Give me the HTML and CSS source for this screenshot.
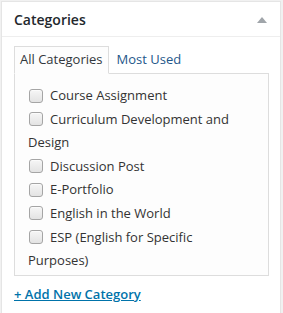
FILE: index.html
```html
<!DOCTYPE html>
<html>
<head>
<meta charset="utf-8">
<link rel="stylesheet" href="styles.css">
</head>
<body>
<div class="postbox">
  <div class="hndle">
    <h3 class="title">Categories</h3>
    <svg class="toggle" width="10" height="6" viewBox="0 0 10 6"><polygon points="5,0 10,6 0,6" fill="#a0a5aa"/></svg>
  </div>
  <div class="inside">
    <ul class="tabs">
      <li class="tab active">All Categories</li>
      <li class="tab"><a class="tab-link" href="#">Most Used</a></li>
    </ul>
    <div class="panel">
      <ul class="checklist">
        <li><label><input type="checkbox" class="cb">Course Assignment</label></li>
        <li><label><input type="checkbox" class="cb">Curriculum Development and Design</label></li>
        <li><label><input type="checkbox" class="cb">Discussion Post</label></li>
        <li><label><input type="checkbox" class="cb">E-Portfolio</label></li>
        <li><label><input type="checkbox" class="cb">English in the World</label></li>
        <li><label><input type="checkbox" class="cb">ESP (English for Specific Purposes)</label></li>
      </ul>
    </div>
    <a class="add-new" href="#">+ Add New Category</a>
  </div>
</div>
</body>
</html>
```
FILE: styles.css
```css
html, body {
  margin: 0;
  padding: 0;
}
body {
  background: #f1f1f1;
  font-family: "Open Sans", "Noto Sans", sans-serif;
  width: 283px;
  height: 313px;
  overflow: hidden;
}
.postbox {
  box-sizing: border-box;
  margin: 1px 0 0 1px;
  width: 280px;
  height: 312px;
  border: 1px solid #e5e5e5;
  border-bottom: none;
  background: #fff;
  overflow: hidden;
}
.hndle {
  display: flex;
  align-items: center;
  justify-content: space-between;
  padding: 8px 13px 7px 12px;
  border-bottom: 1px solid #eee;
}
.title {
  margin: 0;
  font-size: 14px;
  font-weight: 600;
  line-height: 19px;
  color: #23282d;
}
.toggle {
  display: block;
  margin-top: 1px;
}
.inside {
  padding: 9px 11px 0 12px;
}
.tabs {
  list-style: none;
  margin: 0 0 -1px 0;
  padding: 0;
  display: flex;
  gap: 1px;
  position: relative;
  z-index: 1;
}
.tab {
  padding: 3px 6px 5px 5px;
  font-size: 13px;
  line-height: 18px;
  color: #32373c;
  border: 1px solid transparent;
}
.tab.active {
  border-color: #ddd;
  border-bottom-color: #fdfdfd;
  background: #fdfdfd;
}
.tab-link {
  color: #23578a;
  text-decoration: none;
}
.panel {
  border: 1px solid #ddd;
  background: #fdfdfd;
  padding: 10px 16px 2px 13px;
}
.checklist {
  list-style: none;
  margin: 0;
  padding: 0;
}
.checklist li {
  font-size: 13px;
  line-height: 23.6px;
  color: #333;
}
.cb {
  -webkit-appearance: none;
  appearance: none;
  width: 14px;
  height: 14px;
  margin: -2px 7px 0 1px;
  vertical-align: middle;
  border: 1px solid #a5a5a5;
  border-radius: 3px;
  background: linear-gradient(#f6f6f6, #e3e3e3);
  box-shadow: inset 0 1px 0 rgba(255,255,255,0.6);
}
.add-new {
  display: inline-block;
  margin-top: 9px;
  font-size: 13px;
  line-height: 18px;
  font-weight: 600;
  color: #0073aa;
  text-decoration: underline;
}
```
